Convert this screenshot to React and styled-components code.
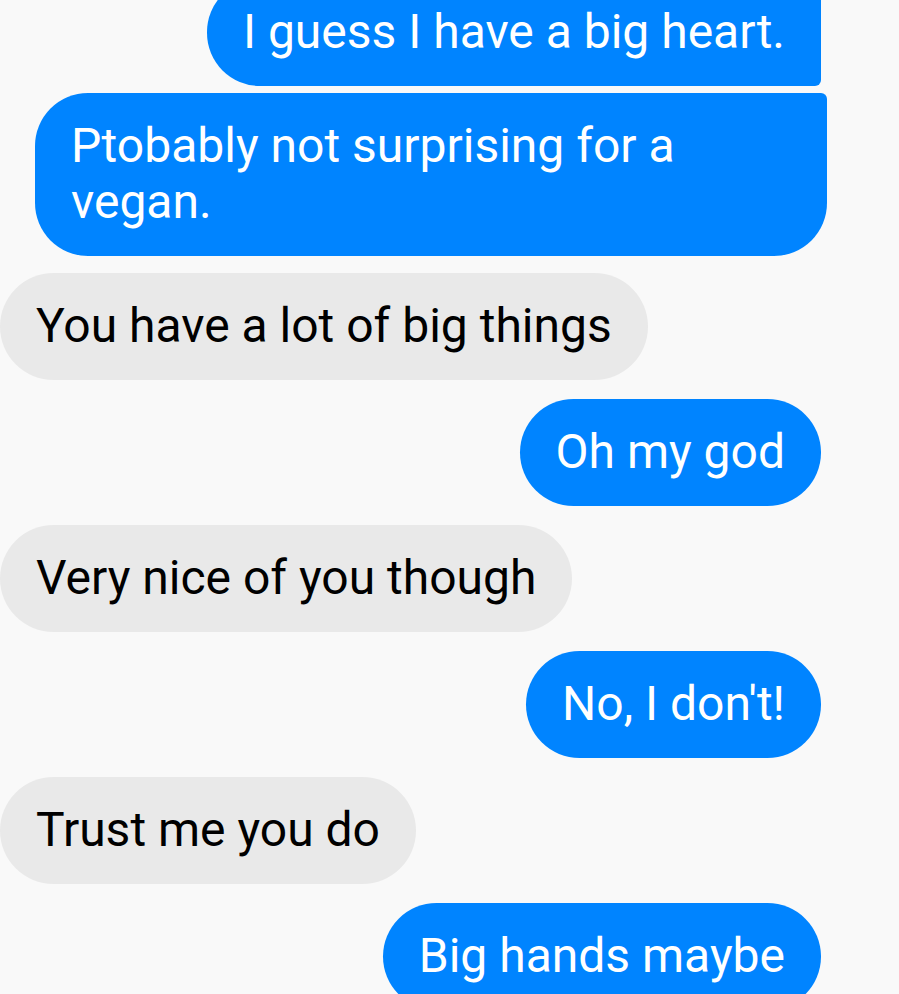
import React from "react";
import styled, { createGlobalStyle } from "styled-components";

const GlobalStyle = createGlobalStyle`
  html, body {
    margin: 0;
    padding: 0;
    background: #f9f9f9;
    overflow: hidden;
  }
`;

const Thread = styled.div`
  display: flex;
  flex-direction: column;
  width: 899px;
  height: 1015px;
  overflow: hidden;
  margin-top: -21px;
  font-family: Roboto, "Noto Sans", sans-serif;
`;

const Row = styled.div`
  display: flex;
  justify-content: ${(p) => (p.mine ? "flex-end" : "flex-start")};
  margin-top: ${(p) => p.gap}px;
  padding-right: ${(p) => p.right}px;
`;

const Bubble = styled.div`
  box-sizing: border-box;
  max-width: ${(p) => (p.mine ? "792px" : "700px")};
  padding: 25px 36px 26px 36px;
  font-size: 48px;
  line-height: 56px;
  color: ${(p) => (p.mine ? "#ffffff" : "#000000")};
  background: ${(p) => (p.mine ? "#0084ff" : "#e9e9e9")};
  border-radius: ${(p) => p.radius};
`;

const messages = [
  { text: "I guess I have a big heart.", mine: true, gap: 0, right: 78, radius: "53px 6px 6px 53px" },
  { text: "Ptobably not surprising for a vegan.", mine: true, gap: 7, right: 72, radius: "53px 6px 53px 53px" },
  { text: "You have a lot of big things", mine: false, gap: 17, right: 0, radius: "54px" },
  { text: "Oh my god", mine: true, gap: 19, right: 78, radius: "54px" },
  { text: "Very nice of you though", mine: false, gap: 19, right: 0, radius: "54px" },
  { text: "No, I don't!", mine: true, gap: 19, right: 78, radius: "54px" },
  { text: "Trust me you do", mine: false, gap: 19, right: 0, radius: "54px" },
  { text: "Big hands maybe", mine: true, gap: 19, right: 78, radius: "54px" },
];

export default function App() {
  return (
    <>
      <GlobalStyle />
      <Thread>
        {messages.map((m, i) => (
          <Row key={i} mine={m.mine} gap={m.gap} right={m.right}>
            <Bubble mine={m.mine} radius={m.radius}>
              {m.text}
            </Bubble>
          </Row>
        ))}
      </Thread>
    </>
  );
}
